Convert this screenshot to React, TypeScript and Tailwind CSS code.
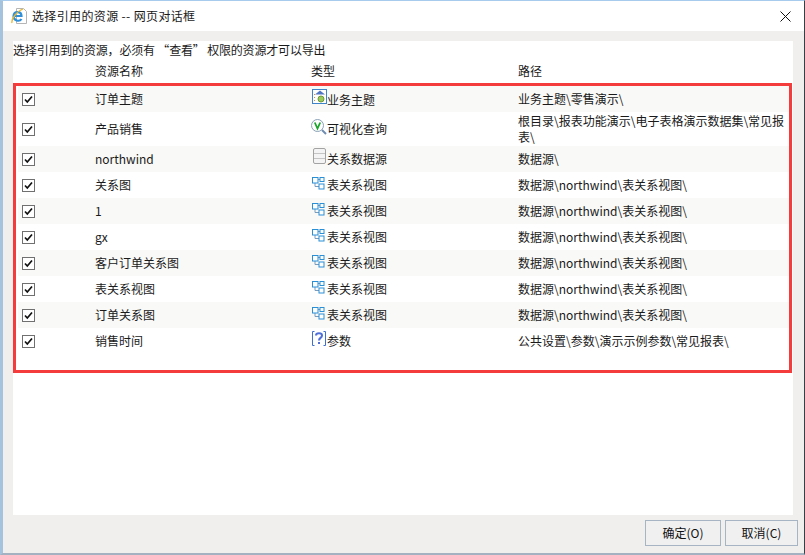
import { Fragment } from 'react';

type Kind = 'theme' | 'query' | 'source' | 'view' | 'param';

type Row = {
  name: string;
  kind: Kind;
  type: string;
  path: string;
};

const rows: Row[] = [
  { name: '订单主题', kind: 'theme', type: '业务主题', path: '业务主题\\零售演示\\' },
  { name: '产品销售', kind: 'query', type: '可视化查询', path: '根目录\\报表功能演示\\电子表格演示数据集\\常见报表\\' },
  { name: 'northwind', kind: 'source', type: '关系数据源', path: '数据源\\' },
  { name: '关系图', kind: 'view', type: '表关系视图', path: '数据源\\northwind\\表关系视图\\' },
  { name: '1', kind: 'view', type: '表关系视图', path: '数据源\\northwind\\表关系视图\\' },
  { name: 'gx', kind: 'view', type: '表关系视图', path: '数据源\\northwind\\表关系视图\\' },
  { name: '客户订单关系图', kind: 'view', type: '表关系视图', path: '数据源\\northwind\\表关系视图\\' },
  { name: '表关系视图', kind: 'view', type: '表关系视图', path: '数据源\\northwind\\表关系视图\\' },
  { name: '订单关系图', kind: 'view', type: '表关系视图', path: '数据源\\northwind\\表关系视图\\' },
  { name: '销售时间', kind: 'param', type: '参数', path: '公共设置\\参数\\演示示例参数\\常见报表\\' },
];

const iconTop: Record<Kind, string> = {
  theme: 'mt-[3px]',
  query: 'mt-[7px]',
  source: 'mt-[2px]',
  view: 'mt-[5px]',
  param: 'mt-[3px]',
};

// 16x16 type icons
const TypeIcon = ({ kind }: { kind: Kind }) => {
  if (kind === 'theme') {
    return (
      <svg width="16" height="16" viewBox="0 0 16 16" fill="none">
        <rect x="1.500" y="0.500" width="14" height="14" stroke="#3f83c9" fill="#fff" />
        <path d="M4 5.500 9 1.500l5 4z" fill="#4f77c4" />
        <circle cx="10" cy="10" r="3" fill="#9acb5c" stroke="#6c9a3a" />
        <path d="M3.500 5v1M3.500 8v1M3.500 11v1" stroke="#d98a3a" />
      </svg>
    );
  }
  if (kind === 'query') {
    return (
      <svg width="16" height="16" viewBox="0 0 16 16" fill="none">
        <circle cx="6.500" cy="6.500" r="6" fill="#fff" stroke="#8aa0b8" />
        <path d="M3.800 3.500 6.500 9.500 9.200 3.500" stroke="#1aa52b" strokeWidth="1.800" />
        <path d="M11 11l4 4" stroke="#6f8cb0" strokeWidth="2" />
      </svg>
    );
  }
  if (kind === 'source') {
    return (
      <svg width="16" height="16" viewBox="0 0 16 16" fill="none">
        <rect x="2.500" y="0.500" width="12" height="15" rx="1.500" fill="#f4f4f4" stroke="#a3a3a3" />
        <path d="M3 5.500h11M3 10.500h11" stroke="#c4c4c4" />
      </svg>
    );
  }
  if (kind === 'view') {
    return (
      <svg width="16" height="16" viewBox="0 0 16 16" fill="none">
        <path d="M7 2.500h2M4 6v3.500h4" stroke="#7a9cbc" />
        <rect x="1.500" y="0.500" width="5.500" height="5.500" fill="#fff" stroke="#2b8fd6" />
        <rect x="9" y="0.500" width="4" height="4" fill="#fff" stroke="#2b8fd6" />
        <rect x="8" y="7" width="5" height="5" fill="#fff" stroke="#2b8fd6" />
      </svg>
    );
  }
  return (
    <svg width="16" height="16" viewBox="0 0 16 16" fill="none">
      <path d="M3.500 0.500h-2v14h2M12.500 0.500h2v14h-2" stroke="#3f6fd0" />
      <path d="M5 4.500C5 1.500 11 1.500 11 4.500 11 7 8 6.800 8 9.500" stroke="#4f6fd8" strokeWidth="2" />
      <rect x="7" y="11" width="2" height="2" fill="#4f6fd8" />
    </svg>
  );
};

const CheckBox = () => (
  <span className="flex h-[13px] w-[13px] items-center justify-center border border-[#707070] bg-white">
    <svg width="11" height="11" viewBox="0 0 11 11" fill="none">
      <path d="M2 5.500 4.300 8 9 2.500" stroke="#111" strokeWidth="1.700" />
    </svg>
  </span>
);

const FooterButton = ({ label, width }: { label: string; width: string }) => (
  <button type="button" className={`h-[26px] ${width} border border-[#a7b4c3] bg-[#f0f0f0] text-[12px] text-[#111]`}>
    {label}
  </button>
);

export default function App() {
  return (
    <div className="flex h-[555px] w-[805px] flex-col overflow-hidden border-t border-r border-b-2 border-l-[3px] border-t-[#a6cbec] border-r-[#3a3f45] border-b-[#a3b1c0] border-l-[#a6c3de] bg-[#f0efee] font-['Noto_Sans_CJK_SC','Liberation_Sans',sans-serif] text-[12px] text-[#1a1a1a]">
      {/* Title bar */}
      <div className="flex h-[30px] shrink-0 items-center bg-white pr-[13px] pl-[8px]">
        <svg width="17" height="18" viewBox="0 0 17 18" fill="none">
          <path d="M5.500 1.500h7l3 3v12h-10z" fill="#fff" stroke="#b5b5b5" />
          <path d="M2.500 9h8C10.500 4 3 3.500 2.500 9 2.500 14 8.500 15 10.500 12" stroke="#2f8fd8" strokeWidth="2.200" />
          <path d="M1 16C0 12 6 4 12 2" stroke="#e8b92f" strokeWidth="1.300" />
        </svg>
        <span className="ml-[4px] tracking-[0.36px]">选择引用的资源 -- 网页对话框</span>
        <svg className="ml-auto" width="11" height="11" viewBox="0 0 11 11" fill="none">
          <path d="M0.500 0.500l10 10M10.500 0.500l-10 10" stroke="#111" />
        </svg>
      </div>

      {/* Content panel */}
      <div className="mt-[10px] mr-[11px] ml-[10px] h-[474px] shrink-0 bg-white">
        <div className="h-[17px] leading-[17px] tracking-[-0.18px]">选择引用到的资源，必须有 “查看” 权限的资源才可以导出</div>
        <div className="grid h-[25px] grid-cols-[82px_216px_207px_1fr] items-center leading-[25px]">
          <span />
          <span>资源名称</span>
          <span>类型</span>
          <span>路径</span>
        </div>
        <div className="mr-[1px] h-[290px] border-[3px] border-[#f53c3c] pl-[2px]">
          <div className="grid grid-cols-[77px_216px_207px_1fr]">
            {rows.map((row, i) => {
              const bg = i % 2 === 0 ? 'bg-[#f9f9f7]' : 'bg-white';
              const tall = i === 1 ? 'h-[34px]' : 'h-[26px]';
              const textTop = i === 0 ? 'mt-[5px]' : i === 1 ? 'mt-[8px]' : 'mt-[4px]';
              return (
                <Fragment key={`${row.name}-${i}`}>
                  <div className={`${bg} ${tall} flex items-center pl-[4px]`}>
                    <CheckBox />
                  </div>
                  <div className={`${bg} ${tall} flex items-center`}>{row.name}</div>
                  <div className={`${bg} ${tall} flex items-start`}>
                    <div className={iconTop[row.kind]}>
                      <TypeIcon kind={row.kind} />
                    </div>
                    <span className={textTop}>{row.type}</span>
                  </div>
                  <div className={`${bg} ${tall} flex items-center leading-[16px]`}>
                    <span className="block break-all">{row.path}</span>
                  </div>
                </Fragment>
              );
            })}
          </div>
        </div>
      </div>

      {/* Footer */}
      <div className="mt-[5px] flex justify-end gap-[4px] pr-[6px]">
        <FooterButton label="确定(O)" width="w-[76px]" />
        <FooterButton label="取消(C)" width="w-[73px]" />
      </div>
    </div>
  );
}
